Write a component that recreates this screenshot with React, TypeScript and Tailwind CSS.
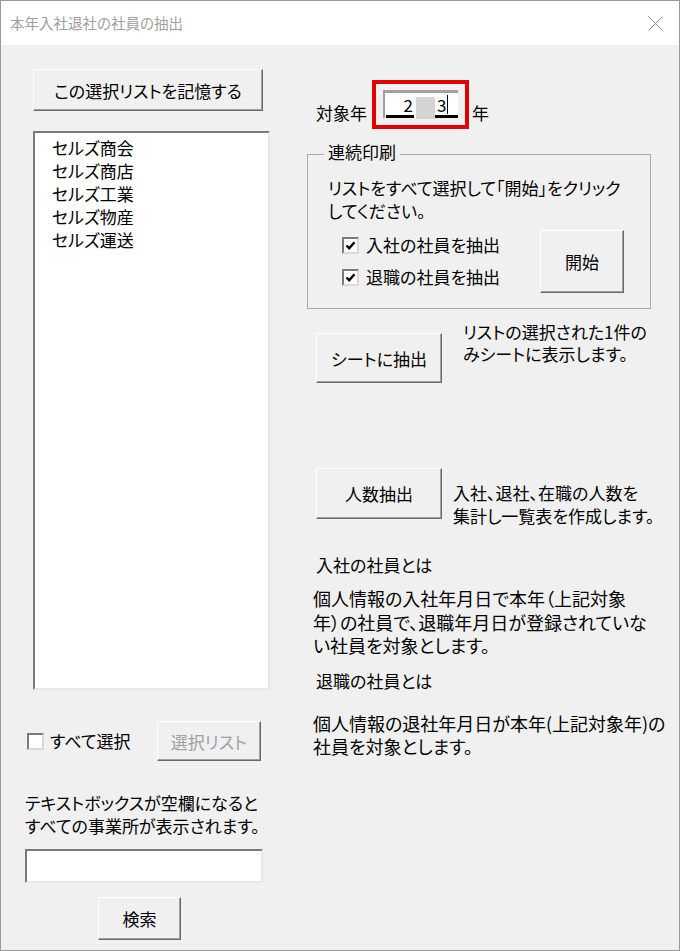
import React from "react";

const jp = "font-['Noto_Sans_CJK_JP','Liberation_Sans',sans-serif] [font-feature-settings:'palt']";

const Btn = ({ children, className = "", disabled = false }: { children: React.ReactNode; className?: string; disabled?: boolean }) => (
  <button
    className={`flex shrink-0 items-center justify-center bg-[#f0f0f0] border border-t-white border-l-white border-r-[#696969] border-b-[#696969] shadow-[inset_-1px_-1px_0_#a0a0a0] text-[17px] leading-[23px] ${
      disabled ? "text-[#a0a0a0]" : "text-black"
    } ${className}`}
  >
    {children}
  </button>
);

const Check = ({ checked }: { checked: boolean }) => (
  <span className="flex h-[17px] w-[17px] shrink-0 items-center justify-center bg-white border-2 border-t-[#7a7a7a] border-l-[#7a7a7a] border-r-[#d8d8d8] border-b-[#d8d8d8]">
    {checked && (
      <svg width="11" height="11" viewBox="0 0 11 11">
        <path d="M1.5 5.5 L4.2 8.2 L9.5 2.2" fill="none" stroke="#000" strokeWidth="2.4" />
      </svg>
    )}
  </span>
);

const offices = ["セルズ商会", "セルズ商店", "セルズ工業", "セルズ物産", "セルズ運送"];

export default function App() {
  return (
    <div className={`flex h-[951px] w-[680px] flex-col border border-[#9a9a9a] bg-[#f0f0f0] text-black ${jp}`}>
      {/* Title bar */}
      <div className="flex h-[44px] shrink-0 items-center justify-between bg-white pl-[9px] pr-[16px]">
        <span className="text-[14.5px] text-[#a0a0a0]">本年入社退社の社員の抽出</span>
        <svg width="15" height="15" viewBox="0 0 15 15">
          <path d="M0.5 0.5 L14.5 14.5 M14.5 0.5 L0.5 14.5" stroke="#8a8a8a" strokeWidth="1" />
        </svg>
      </div>

      <div className="flex flex-1">
        {/* Left column */}
        <div className="flex w-[306px] shrink-0 flex-col pl-[24px]">
          <Btn className="ml-[8px] mt-[24px] h-[42px] w-[230px]">この選択リストを記憶する</Btn>

          <div className="ml-[8px] mt-[20px] h-[559px] w-[237px] bg-white border-2 border-t-[#7a7a7a] border-l-[#7a7a7a] border-r-[#e8e8e8] border-b-[#e8e8e8] pl-[17px] pt-[3px] text-[17px] leading-[23px]">
            {offices.map((o) => (
              <div key={o}>{o}</div>
            ))}
          </div>

          <div className="mt-[31px] flex h-[40px] items-center">
            <div className="flex w-[132px] items-center pl-[2px]">
              <Check checked={false} />
              <span className="ml-[6px] text-[17px]">すべて選択</span>
            </div>
            <Btn disabled className="h-[40px] w-[104px]">選択リスト</Btn>
          </div>

          <div className="mt-[30px] whitespace-nowrap text-[17px] leading-[23px]">
            テキストボックスが空欄になると
            <br />
            すべての事業所が表示されます。
          </div>

          <div className="mt-[12px] h-[34px] w-[238px] bg-white border-2 border-t-[#7a7a7a] border-l-[#7a7a7a] border-r-[#e8e8e8] border-b-[#e8e8e8]" />

          <Btn className="ml-[73px] mt-[14px] h-[43px] w-[83px]">検索</Btn>
        </div>

        {/* Right column */}
        <div className="flex flex-1 flex-col">
          <div className="mt-[35px] flex items-end">
            <span className="mb-[5px] ml-[9px] text-[17px] leading-[23px]">対象年</span>
            <div className="ml-[5px] h-[49px] w-[97px] border-4 border-[#e20000] pl-[7px] pt-[6px]">
              <div className="flex h-[28px] w-[75px] items-end bg-white border-t-[3px] border-l-2 border-[#a0a0a0] text-[17px] leading-[20px]">
                <span className="ml-[1px] w-[28px] border-b-[3px] border-black pr-[1px] text-right">2</span>
                <span className="mb-[-1px] ml-[2px] h-[22px] w-[19px] bg-[#d4d4d4]" />
                <span className="flex w-[23px] items-end border-b-[3px] border-black pl-[2px]">
                  3<span className="mb-[1px] ml-[1px] h-[19px] w-px bg-black" />
                </span>
              </div>
            </div>
            <span className="mb-[5px] ml-[3px] text-[17px] leading-[23px]">年</span>
          </div>

          <fieldset className="mt-[11px] h-[169px] w-[344px] border border-[#a9a9a9] pl-[20px]">
            <legend className="ml-[-4px] px-[4px] pb-[5px] text-[17px] leading-[23px]">連続印刷</legend>
            <div className="mt-[8px] whitespace-nowrap text-[17px] leading-[23px]">
              リストをすべて選択して「開始」をクリック
              <br />
              してください。
            </div>
            <div className="mt-[7px] flex items-start">
              <div className="ml-[14px] flex w-[198px] flex-col">
                {["入社の社員を抽出", "退職の社員を抽出"].map((t) => (
                  <div key={t} className="flex h-[32px] items-center">
                    <Check checked />
                    <span className="ml-[7px] text-[17px]">{t}</span>
                  </div>
                ))}
              </div>
              <Btn className="mt-[1px] h-[63px] w-[84px]">開始</Btn>
            </div>
          </fieldset>

          <div className="mt-[12px] flex items-start">
            <Btn className="ml-[9px] mt-[12px] h-[50px] w-[126px]">シートに抽出</Btn>
            <div className="ml-[21px] whitespace-nowrap text-[17px] leading-[22px]">
              リストの選択された1件の
              <br />
              みシートに表示します。
            </div>
          </div>

          <div className="mt-[85px] flex items-start">
            <Btn className="ml-[9px] h-[51px] w-[126px]">人数抽出</Btn>
            <div className="ml-[11px] mt-[13px] whitespace-nowrap text-[17px] leading-[23px]">
              入社、退社、在職の人数を
              <br />
              集計し一覧表を作成します。
            </div>
          </div>

          <div className="ml-[9px] mt-[26px] text-[17px] leading-[23px]">入社の社員とは</div>
          <div className="ml-[6px] mt-[11px] whitespace-nowrap text-[18px] leading-[23.5px]">
            個人情報の入社年月日で本年（上記対象
            <br />
            年）の社員で、退職年月日が登録されていな
            <br />
            い社員を対象とします。
          </div>
          <div className="ml-[9px] mt-[11px] text-[17px] leading-[23px]">退職の社員とは</div>
          <div className="ml-[6px] mt-[20px] whitespace-nowrap text-[18px] leading-[23px]">
            個人情報の退社年月日が本年(上記対象年)の
            <br />
            社員を対象とします。
          </div>
        </div>
      </div>
    </div>
  );
}
